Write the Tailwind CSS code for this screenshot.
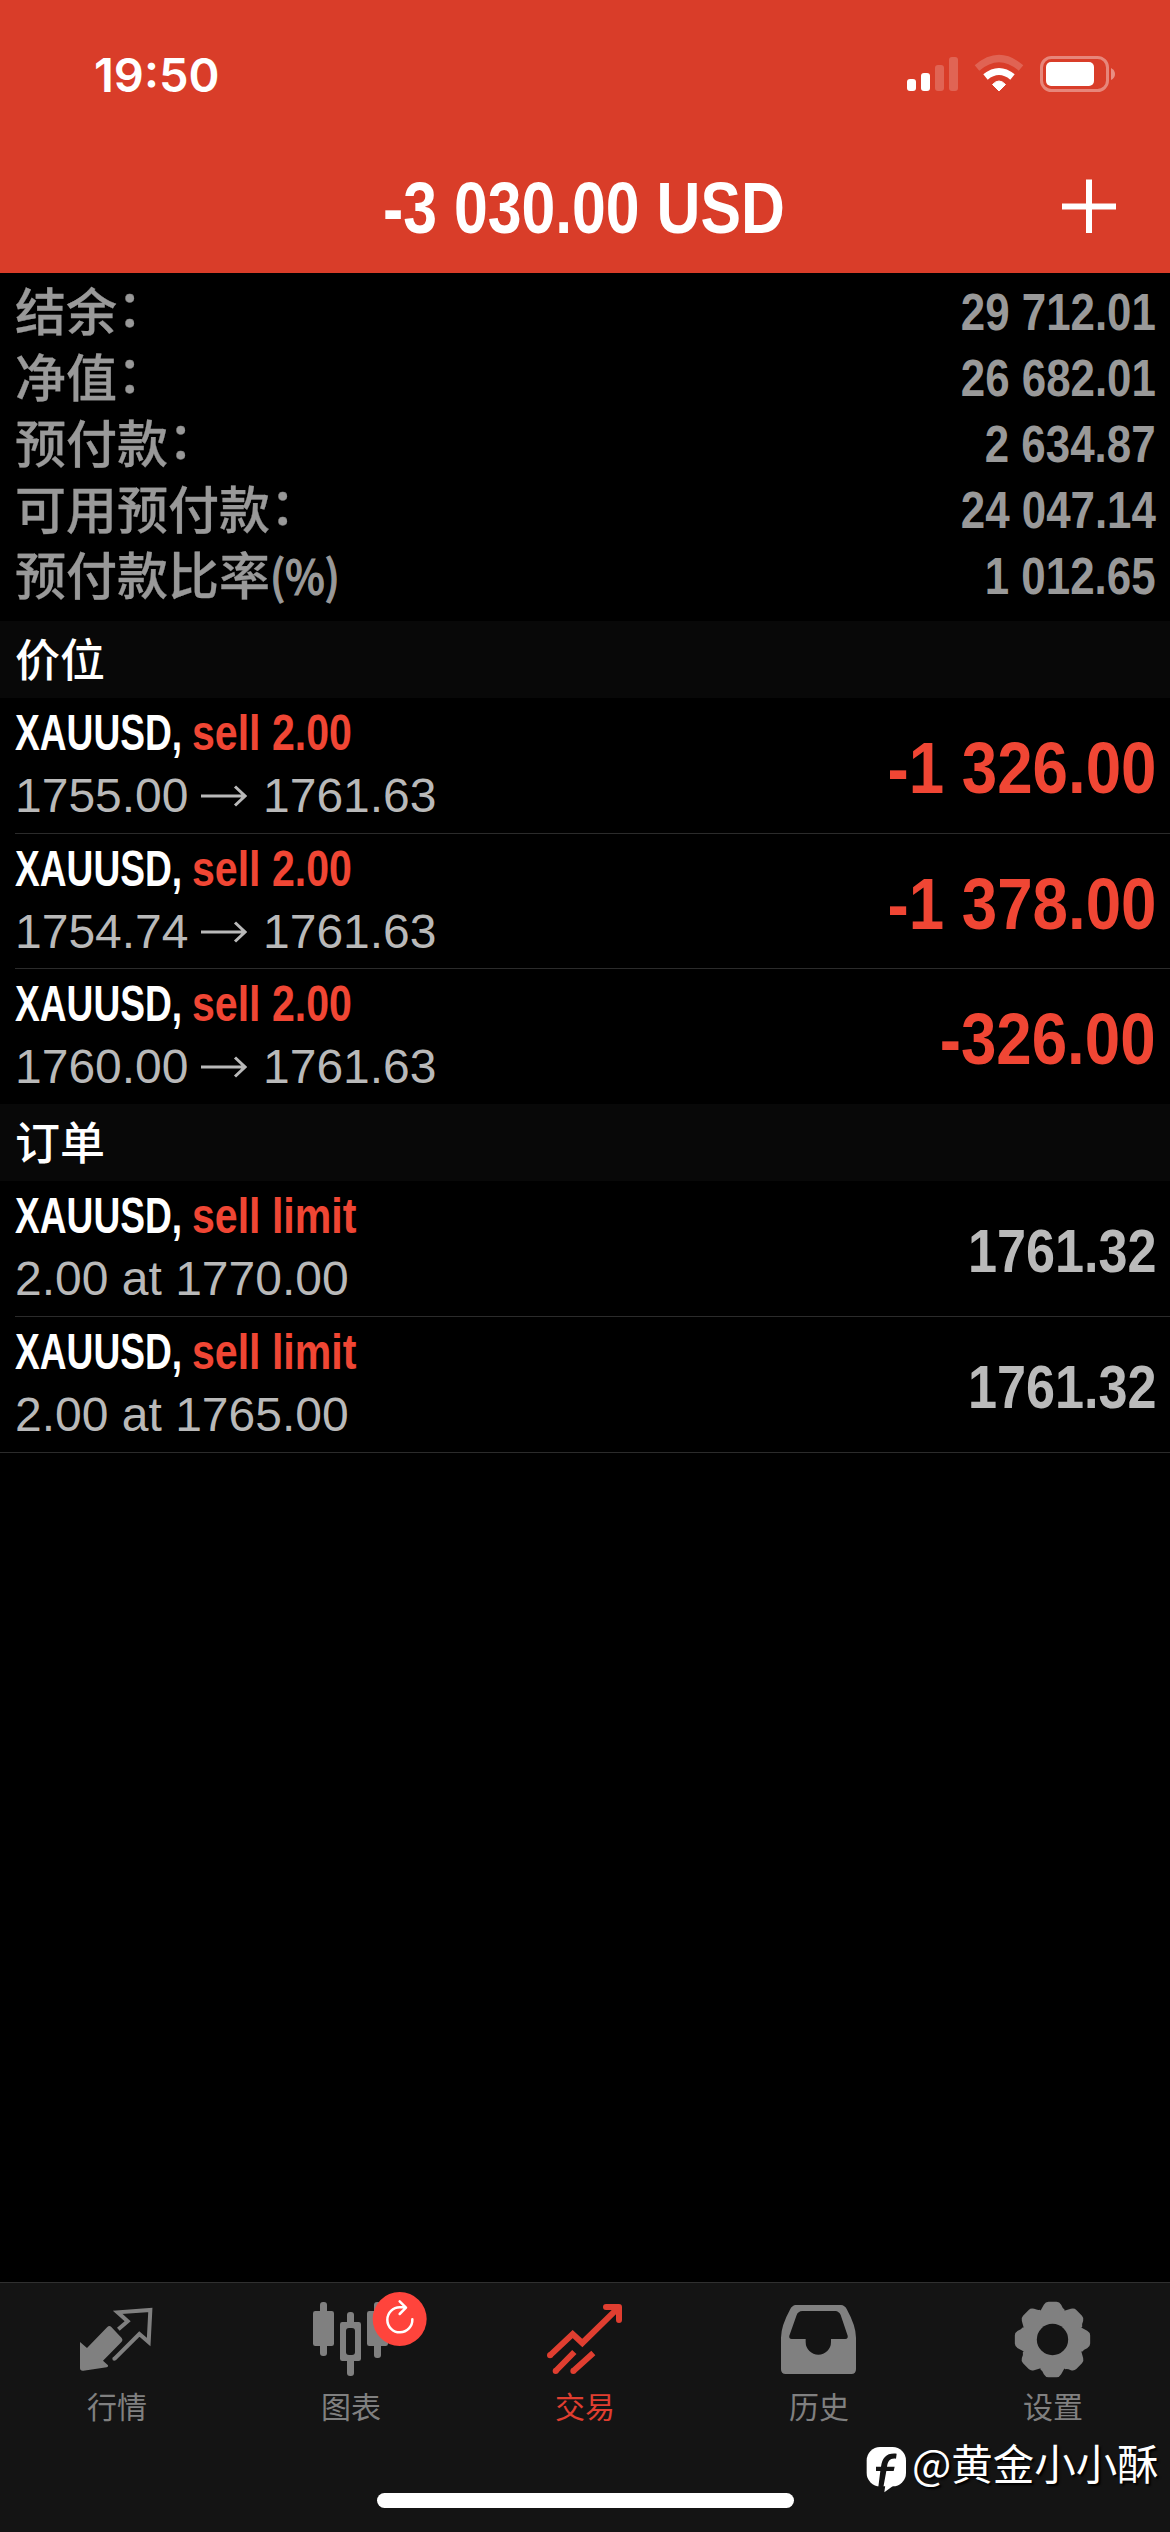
<!DOCTYPE html>
<html lang="zh-CN">
<head>
<meta charset="utf-8">
<title>交易</title>
<script src="https://cdn.jsdelivr.net/npm/@tailwindcss/browser@4"></script>
</head>
<body class="bg-black">
<div class="w-[1170px] h-[2532px] bg-black flex flex-col overflow-hidden font-['Liberation_Sans','Noto_Sans_CJK_SC',sans-serif] whitespace-nowrap">

  <header class="h-[273px] shrink-0 bg-[#d93d29] text-white flex flex-col">
    <div class="h-[147px] flex justify-between">
      <div class="pl-[94px] pt-[46px] font-['Inter',sans-serif] font-semibold text-[47px] leading-[57px]">19:50</div>
      <svg class="w-[220px] h-[60px] mt-[45px] mr-[50px]" viewBox="900 45 220 60">
        <g fill="#fff">
          <rect x="907" y="79" width="9" height="12" rx="3"/>
          <rect x="921" y="73" width="9" height="18" rx="3"/>
          <g opacity=".2"><rect x="935" y="65" width="9" height="26" rx="3"/><rect x="949" y="57" width="9" height="34" rx="3"/></g>
          <path d="M999 91 L992.5 84.5 Q999 77.500 1005.500 84.500Z" stroke="#fff" stroke-width="1" stroke-linejoin="round"/>
        </g>
        <path d="M985.500 77 Q999 66 1012.500 77" fill="none" stroke="#fff" stroke-width="7"/>
        <path d="M977 68 Q999 49 1021 68" fill="none" stroke="#fff" stroke-opacity=".2" stroke-width="7"/>
        <rect x="1041.500" y="57.500" width="66" height="33" rx="10" fill="none" stroke="#fff" stroke-opacity=".38" stroke-width="3"/>
        <rect x="1046" y="62" width="48" height="24" rx="5" fill="#fff"/>
        <path d="M1111 68 Q1115 70 1115 74 T1111 80Z" fill="#fff" fill-opacity=".42"/>
      </svg>
    </div>
    <div class="h-[126px] flex items-start">
      <div class="w-[383px]"></div>
      <div class="w-[640px] pt-[19px] h-full"><div class="w-max origin-left scale-x-[.832] font-bold text-[73px] leading-[84px]">-3 030.00 USD</div></div>
      <svg class="w-[60px] h-[60px] mt-[29px] ml-[35px]" viewBox="0 0 60 60"><path d="M4 30.500H58M31 3.500V57" stroke="#fff" stroke-width="6" fill="none"/></svg>
    </div>
  </header>

  <section class="h-[348px] shrink-0 pt-[7px] pl-[15px] pr-[14px] text-[#999] text-[51px] font-medium leading-[66px]">
    <div class="h-[66px] flex justify-between"><div class="flex pt-px [-webkit-text-stroke:0.3px]"><span>结余</span><span lang="zh-TW" class="font-['Noto_Sans_CJK_TC',sans-serif] -mt-[6px] [font-feature-settings:'halt']">：</span></div><b class="origin-right scale-x-[.86]">29 712.01</b></div>
    <div class="h-[66px] flex justify-between"><div class="flex pt-px [-webkit-text-stroke:0.3px]"><span>净值</span><span lang="zh-TW" class="font-['Noto_Sans_CJK_TC',sans-serif] -mt-[6px] [font-feature-settings:'halt']">：</span></div><b class="origin-right scale-x-[.86]">26 682.01</b></div>
    <div class="h-[66px] flex justify-between"><div class="flex pt-px [-webkit-text-stroke:0.3px]"><span>预付款</span><span lang="zh-TW" class="font-['Noto_Sans_CJK_TC',sans-serif] -mt-[6px] [font-feature-settings:'halt']">：</span></div><b class="origin-right scale-x-[.86]">2 634.87</b></div>
    <div class="h-[66px] flex justify-between"><div class="flex pt-px [-webkit-text-stroke:0.3px]"><span>可用预付款</span><span lang="zh-TW" class="font-['Noto_Sans_CJK_TC',sans-serif] -mt-[6px] [font-feature-settings:'halt']">：</span></div><b class="origin-right scale-x-[.86]">24 047.14</b></div>
    <div class="h-[66px] flex justify-between"><div class="flex pt-px [-webkit-text-stroke:0.3px]"><span>预付款比率</span><span class="font-['Noto_Sans_CJK_SC',sans-serif] text-[46px] -mt-[4px] origin-left scale-x-[.92] [-webkit-text-stroke:1.2px]">(%)</span></div><b class="origin-right scale-x-[.86]">1 012.65</b></div>
  </section>

  <h2 class="h-[77px] shrink-0 bg-[#080808] text-white text-[45px] font-medium leading-[81px] pl-[15px]">价位</h2>

  <section id="positions" class="shrink-0"></section>

  <h2 class="h-[77px] shrink-0 bg-[#080808] text-white text-[45px] font-medium leading-[81px] pl-[15px]">订单</h2>

  <section id="orders" class="shrink-0 border-b border-[#2b2b2b]"></section>

  <div class="grow"></div>

  <nav class="relative h-[250px] shrink-0 bg-[#141414] border-t border-[#303030] text-[#808080]">
    <div class="flex text-[30px] leading-[42px] text-center">
      <div class="w-[234px]">
        <svg class="block w-[234px] h-[104px]" viewBox="0 39 702 312" fill="currentColor">
          <path d="M240 216L261 234L322 171Q328 165 334 171L365 204Q370 210 365 215L309 272L324 286Q326 290 320 292L250 302Q240 303 240 294Z"/>
          <path d="M355 178L383 154L353 127L451 120L446 216L418 192L344 266" fill="none" stroke="currentColor" stroke-width="12"/>
          <circle cx="343" cy="266" r="6"/>
        </svg>
        <div>行情</div>
      </div>
      <div class="w-[234px]">
        <svg class="block w-[234px] h-[104px]" viewBox="702 39 702 312" fill="currentColor">
          <rect x="939" y="123" width="63" height="105" rx="7"/><rect x="960" y="96" width="21" height="162" rx="9"/>
          <rect x="1020" y="156" width="63" height="117" rx="7"/><rect x="1041" y="126" width="21" height="192" rx="9"/>
          <rect x="1038" y="174" width="27" height="81" rx="9" fill="#141414"/>
          <rect x="1101" y="123" width="63" height="105" rx="7"/><rect x="1122" y="96" width="21" height="168" rx="9"/>
          <circle cx="1199" cy="147" r="81" fill="#ff443c"/>
          <path d="M1237 148A37.500 37.500 0 1 1 1200 112H1216M1199 94L1218 113L1199 132" fill="none" stroke="#fff" stroke-width="7.500" stroke-linecap="round" stroke-linejoin="round"/>
        </svg>
        <div>图表</div>
      </div>
      <div class="w-[234px] text-[#e03e30]">
        <svg class="block w-[234px] h-[104px]" viewBox="54 39 702 312" fill="none" stroke="currentColor" stroke-width="18">
          <path d="M300 256L368 192L397 219L500 118"/>
          <path d="M468 111H507V150" stroke-linecap="round" stroke-linejoin="round"/>
          <path d="M478 108H512V138Z" fill="currentColor" stroke="none"/>
          <path d="M317 303L373 246M370 303L430 249"/>
          <g fill="currentColor" stroke="none"><circle cx="300" cy="256" r="9"/><circle cx="317" cy="303" r="9"/><circle cx="370" cy="303" r="9"/></g>
        </svg>
        <div>交易</div>
      </div>
      <div class="w-[234px]">
        <svg class="block w-[234px] h-[104px]" viewBox="-114 39 702 312" fill="currentColor" fill-rule="evenodd">
          <path d="M167 105H303Q314 106 320 117Q348 168 348 203V298Q348 312 334 312H137Q123 312 123 298V203Q123 168 151 117Q157 106 167 105ZM187 123Q174 124 170 135L148 197Q146 206 155 207H197V216A38 38 0 0 0 273 216V207H316Q325 206 323 197L302 135Q297 124 286 123Z"/>
        </svg>
        <div>历史</div>
      </div>
      <div class="w-[234px]">
        <svg class="block w-[234px] h-[104px]" viewBox="588 39 702 312" fill="currentColor">
          <defs><path id="tooth" d="M-36 -86L-26 -104Q-21 -113 -12 -113H12Q21 -113 26 -104Q30 -93 36 -90V-60H-36Z"/></defs>
          <g transform="translate(937.500 208.500)">
            <circle r="93"/>
            <use href="#tooth"/><use href="#tooth" transform="rotate(45)"/><use href="#tooth" transform="rotate(90)"/><use href="#tooth" transform="rotate(135)"/>
            <use href="#tooth" transform="rotate(180)"/><use href="#tooth" transform="rotate(225)"/><use href="#tooth" transform="rotate(270)"/><use href="#tooth" transform="rotate(315)"/>
            <circle r="47" fill="#141414"/>
          </g>
        </svg>
        <div>设置</div>
      </div>
    </div>
    <div class="absolute left-[377px] top-[210px] w-[417px] h-[15px] rounded-full bg-white"></div>
    <div class="absolute left-[865px] top-[153px] flex items-start text-white">
      <svg class="w-[43px] h-[52px] mt-[8px]" viewBox="375 522 129 156">
        <path d="M436 645L433 667L466 643Z" fill="#fff"/>
        <rect x="380" y="531" width="118" height="118" rx="40" fill="#fff"/>
        <path d="M470 551C440 548 427 562 423 590H408V603H421L415 650L430 652L439 603H461L464 590H441C444 572 450 564 468 566Z" fill="#141414"/>
      </svg>
      <span class="ml-[4px] font-['Noto_Sans_CJK_SC',sans-serif] text-[41.500px] leading-[52px] [text-shadow:2px_2px_2px_#000]">@黄金小小酥</span>
    </div>
  </nav>
</div>

<script>
  const arrow = '<svg class="w-[46px] h-[24px] ml-[15px] mr-[16px]" viewBox="0 0 46 24"><path d="M0 12H44M34 2.500L44 12L34 21.500" fill="none" stroke="#b9b9b9" stroke-width="3"/></svg>';
  const row = (side, detail, amount, line, h) => `
    <div class="${h} flex justify-between pl-[15px]">
      <div class="grow flex justify-between pr-[14px] ${line ? 'border-b border-[#2b2b2b]' : ''}">
        <div>
          <div class="flex h-[54px] pt-[6px] font-bold text-[49.500px] leading-[58px] text-white">
            <div class="w-[177px]"><div class="w-max origin-left scale-x-[.75]">XAUUSD,</div></div>
            <div class="w-max origin-left scale-x-[.83] text-[#f04634]">${side}</div>
          </div>
          <div class="flex items-center pt-[16px] text-[48px] leading-[56px] text-[#b9b9b9]">${detail}</div>
        </div>
        ${amount}
      </div>
    </div>`;
  const profit = v => `<div class="pt-[28px] origin-right scale-x-[.872] font-bold text-[73px] leading-[84px] text-[#f04634]">${v}</div>`;
  const price = v => `<div class="pt-[35px] origin-right scale-x-[.855] font-bold text-[61px] leading-[70px] text-[#bababa]">${v}</div>`;
  const move = (a, b) => `<span class="w-[171px]">${a}</span>${arrow}<span>${b}</span>`;
  document.getElementById('positions').innerHTML =
    row('sell 2.00', move('1755.00', '1761.63'), profit('-1 326.00'), true, 'h-[136px]') +
    row('sell 2.00', move('1754.74', '1761.63'), profit('-1 378.00'), true, 'h-[135px]') +
    row('sell 2.00', move('1760.00', '1761.63'), profit('-326.00'), false, 'h-[135px]');
  document.getElementById('orders').innerHTML =
    row('sell limit', '2.00 at 1770.00', price('1761.32'), true, 'h-[136px]') +
    row('sell limit', '2.00 at 1765.00', price('1761.32'), false, 'h-[135px]');
</script>
</body>
</html>
